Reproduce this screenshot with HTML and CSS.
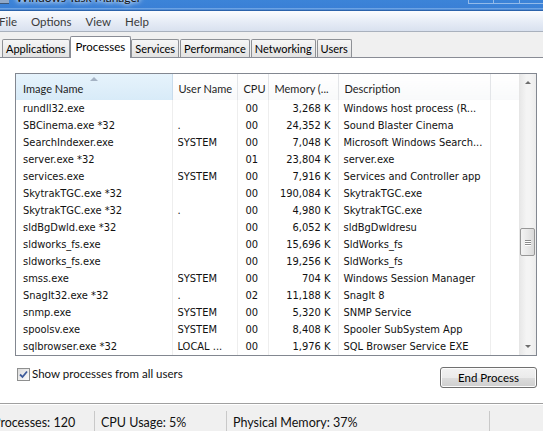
FILE: index.html
```html
<!DOCTYPE html>
<html lang="en">
<head>
  <meta charset="UTF-8">
  <title>Windows Task Manager</title>
  <link rel="stylesheet" href="styles.css">
</head>
<body>
  <div class="window">
    <div class="titlebar">
      <span class="app-icon"></span>
      <span class="title">Windows Task Manager</span>
      <div class="caption-btns">
        <span></span><span></span><span></span>
      </div>
    </div>

    <nav class="menubar">
      <span class="menu-item first">File</span>
      <span class="menu-item">Options</span>
      <span class="menu-item">View</span>
      <span class="menu-item">Help</span>
    </nav>

    <div class="tabstrip">
      <div class="tab">Applications</div>
      <div class="tab active">Processes</div>
      <div class="tab">Services</div>
      <div class="tab">Performance</div>
      <div class="tab">Networking</div>
      <div class="tab">Users</div>
    </div>

    <div class="page">
      <div class="listview">
        <table class="proc-table">
          <colgroup>
            <col class="c-name"><col class="c-user"><col class="c-cpu"><col class="c-mem"><col class="c-desc"><col class="c-fill">
          </colgroup>
          <thead>
            <tr>
              <th class="sorted"><span class="sort-arrow"></span>Image Name</th>
              <th>User Name</th>
              <th>CPU</th>
              <th>Memory (...</th>
              <th>Description</th>
              <th class="fill"></th>
            </tr>
          </thead>
          <tbody>
            <tr><td>rundll32.exe</td><td></td><td class="cpu">00</td><td class="mem">3,268 K</td><td>Windows host process (R...</td><td></td></tr>
            <tr><td>SBCinema.exe *32</td><td>.</td><td class="cpu">00</td><td class="mem">24,352 K</td><td>Sound Blaster Cinema</td><td></td></tr>
            <tr><td>SearchIndexer.exe</td><td><span class="clip">SYSTEM</span></td><td class="cpu">00</td><td class="mem">7,048 K</td><td>Microsoft Windows Search...</td><td></td></tr>
            <tr><td>server.exe *32</td><td></td><td class="cpu">01</td><td class="mem">23,804 K</td><td>server.exe</td><td></td></tr>
            <tr><td>services.exe</td><td><span class="clip">SYSTEM</span></td><td class="cpu">00</td><td class="mem">7,916 K</td><td>Services and Controller app</td><td></td></tr>
            <tr><td>SkytrakTGC.exe *32</td><td></td><td class="cpu">00</td><td class="mem">190,084 K</td><td>SkytrakTGC.exe</td><td></td></tr>
            <tr><td>SkytrakTGC.exe *32</td><td>.</td><td class="cpu">00</td><td class="mem">4,980 K</td><td>SkytrakTGC.exe</td><td></td></tr>
            <tr><td>sldBgDwld.exe *32</td><td></td><td class="cpu">00</td><td class="mem">6,052 K</td><td>sldBgDwldresu</td><td></td></tr>
            <tr><td>sldworks_fs.exe</td><td></td><td class="cpu">00</td><td class="mem">15,696 K</td><td>SldWorks_fs</td><td></td></tr>
            <tr><td>sldworks_fs.exe</td><td></td><td class="cpu">00</td><td class="mem">19,256 K</td><td>SldWorks_fs</td><td></td></tr>
            <tr><td>smss.exe</td><td><span class="clip">SYSTEM</span></td><td class="cpu">00</td><td class="mem">704 K</td><td>Windows Session Manager</td><td></td></tr>
            <tr><td>SnagIt32.exe *32</td><td>.</td><td class="cpu">02</td><td class="mem">11,188 K</td><td>SnagIt 8</td><td></td></tr>
            <tr><td>snmp.exe</td><td>SYSTEM</td><td class="cpu">00</td><td class="mem">5,320 K</td><td>SNMP Service</td><td></td></tr>
            <tr><td>spoolsv.exe</td><td>SYSTEM</td><td class="cpu">00</td><td class="mem">8,408 K</td><td>Spooler SubSystem App</td><td></td></tr>
            <tr><td>sqlbrowser.exe *32</td><td>LOCAL ...</td><td class="cpu">00</td><td class="mem">1,976 K</td><td>SQL Browser Service EXE</td><td></td></tr>
          </tbody>
        </table>

        <div class="scrollbar">
          <div class="sb-btn"><span class="arrow up"></span></div>
          <div class="sb-track">
            <div class="sb-thumb"><span></span><span></span><span></span></div>
          </div>
          <div class="sb-btn"><span class="arrow down"></span></div>
        </div>
      </div>

      <div class="actions">
        <label class="check">
          <span class="check-box">
            <svg width="9" height="9" viewBox="0 0 9 9"><path d="M1 4.5 L3.5 7 L8 1.5" fill="none" stroke="#3c5a9a" stroke-width="1.8"/></svg>
          </span>
          Show processes from all users
        </label>
        <button class="btn">End Process</button>
      </div>
    </div>

    <div class="statusbar">
      <div class="status-cell first">Processes: 120</div>
      <div class="status-cell second">CPU Usage: 5%</div>
      <div class="status-cell third">Physical Memory: 37%</div>
      <div class="status-cell rest"></div>
    </div>
  </div>
</body>
</html>
```

FILE: styles.css
```css
* {
  margin: 0;
  padding: 0;
  box-sizing: border-box;
}

body {
  font-family: Lato, "Open Sans", sans-serif;
  color: #000;
  background: #f0f0f0;
  width: 543px;
  height: 431px;
  overflow: hidden;
}

.window {
  width: 543px;
  height: 431px;
  overflow: hidden;
}

/* title bar (only its lower edge is on screen) */
.titlebar {
  height: 11px;
  display: flex;
  overflow: hidden;
  background: linear-gradient(#3c84d8 0%, #3a80d6 70%, #7fb0e8 80%, #3577cc 90%, #22518f 100%);
}

.app-icon {
  width: 9px;
  height: 4px;
  background: #8fa8c8;
  border-bottom: 1px solid #3d5778;
}

.title {
  margin: -9px 0 0 7px;
  font-size: 12px;
  line-height: 14px;
  color: #111;
  text-shadow: 0 0 4px #fff, 0 0 6px #fff;
}

.caption-btns {
  margin-left: auto;
  margin-right: -2px;
  display: flex;
  height: 4px;
}

.caption-btns span {
  width: 26px;
  border: 1px solid rgba(255, 255, 255, 0.45);
  border-top: none;
  border-right: none;
}

.caption-btns span:first-child {
  width: 25px;
}

/* menu bar */
.menubar {
  height: 21px;
  display: flex;
  align-items: center;
  background: linear-gradient(#fbfcfe, #e6ecf6 55%, #d9e1ef);
  border-bottom: 1px solid #a9b1bd;
  font-size: 11.5px;
  color: #3a3a3a;
}

.menu-item {
  margin-left: 14px;
}

.menu-item.first {
  margin-left: -1px;
}

/* tabs */
.tabstrip {
  height: 26px;
  display: flex;
  align-items: flex-end;
  padding-left: 2px;
  border-bottom: 1px solid #898c95;
  font-size: 11px;
}

.tab {
  height: 18px;
  padding: 0 3px;
  margin-right: 1px;
  display: flex;
  align-items: center;
  border: 1px solid #8e9196;
  border-bottom: none;
  border-radius: 2px 2px 0 0;
  background: linear-gradient(#f6f6f6, #e2e2e2);
  color: #000;
}

.tab.active {
  height: 22px;
  margin: 0 0 -1px -1px;
  padding: 0 5px 3px;
  background: #fff;
  border-color: #898c95;
  font-size: 11.5px;
}

/* process page */
.page {
  height: 345px;
  background: #fff;
  padding: 15px 0 0 15px;
}

.listview {
  width: 522px;
  height: 283px;
  display: flex;
  border: 1px solid #828790;
  overflow: hidden;
}

.proc-table {
  width: 503px;
  table-layout: fixed;
  border-collapse: collapse;
  align-self: flex-start;
}

.c-name { width: 156px; }
.c-user { width: 65px; }
.c-cpu { width: 31px; }
.c-mem { width: 70px; }
.c-desc { width: 152px; }
.c-fill { width: 29px; }

.proc-table th {
  height: 26px;
  padding: 3px 0 0 6px;
  text-align: left;
  font-weight: normal;
  font-size: 11px;
  color: #1e1e1e;
  white-space: nowrap;
  overflow: hidden;
  background: linear-gradient(#fff, #f8f9fa);
  border-right: 1px solid #e3e5e8;
}

.proc-table th.sorted {
  position: relative;
  padding-left: 7px;
  background: linear-gradient(#e6f3fc, #d8ebf8);
  border-right-color: #c9dcec;
}

.proc-table th.fill {
  border-right: none;
}

.sort-arrow {
  position: absolute;
  top: 3px;
  left: 74px;
  width: 0;
  height: 0;
  border-left: 4px solid transparent;
  border-right: 4px solid transparent;
  border-bottom: 4px solid #a4b2c3;
}

.proc-table td {
  height: 17px;
  padding: 0 0 0 5px;
  font-family: "DejaVu Sans Condensed", "DejaVu Sans", sans-serif;
  font-stretch: condensed;
  font-size: 11px;
  line-height: 17px;
  color: #111;
  white-space: nowrap;
  overflow: hidden;
  border-right: 1px solid #eeeeee;
}

.proc-table td:first-child {
  padding-left: 7px;
}

.proc-table td:last-child {
  border-right: none;
}

.proc-table td.cpu {
  padding-left: 8px;
}

.proc-table td.mem {
  text-align: right;
  padding: 0 7px 0 0;
}

.clip {
  display: inline-block;
  width: 42px;
  overflow: hidden;
  vertical-align: top;
}

/* vertical scroll bar */
.scrollbar {
  width: 17px;
  margin-left: auto;
  display: flex;
  flex-direction: column;
  background: linear-gradient(90deg, #e8e8e8, #f4f4f4 40%, #f4f4f4 60%, #ececec);
  border-left: 1px solid #e6e6e6;
}

.sb-btn {
  height: 17px;
  display: flex;
  align-items: center;
  justify-content: center;
}

.arrow {
  width: 0;
  height: 0;
  border-left: 3px solid transparent;
  border-right: 3px solid transparent;
}

.arrow.up {
  border-bottom: 3px solid #6d6d6d;
}

.arrow.down {
  border-top: 3px solid #6d6d6d;
}

.sb-track {
  flex: 1;
}

.sb-thumb {
  margin: 137px 1px 0 0;
  height: 28px;
  border: 1px solid #979797;
  border-radius: 2px;
  background: linear-gradient(90deg, #f3f3f3, #e8e8e8 50%, #d9d9d9);
  display: flex;
  flex-direction: column;
  align-items: center;
  justify-content: center;
  gap: 1px;
}

.sb-thumb span {
  width: 6px;
  height: 1px;
  background: #8a8a8a;
  box-shadow: 0 1px 0 #fff;
}

/* checkbox + button row */
.actions {
  width: 522px;
  margin-top: 11px;
  display: flex;
  align-items: flex-start;
  justify-content: space-between;
}

.check {
  display: flex;
  align-items: center;
  gap: 2px;
  margin: 0 0 0 2px;
  font-size: 11.5px;
  color: #111;
  line-height: 14px;
}

.check-box {
  width: 13px;
  height: 13px;
  border: 1px solid #8e8f8f;
  background: linear-gradient(135deg, #dcdcdc, #fbfbfb);
  display: flex;
  align-items: center;
  justify-content: center;
}

.btn {
  width: 97px;
  height: 21px;
  border: 1px solid #707070;
  border-radius: 3px;
  background: linear-gradient(#f2f2f2 0%, #ebebeb 50%, #dddddd 51%, #cfcfcf 100%);
  box-shadow: inset 0 0 0 1px #fcfcfc;
  font-family: Lato, "Open Sans", sans-serif;
  font-size: 11.5px;
  color: #000;
}

/* status bar */
.statusbar {
  height: 29px;
  display: flex;
  border-top: 1px solid #a0a0a0;
  box-shadow: inset 0 1px 0 #fff;
  background: #f0f0f0;
  font-size: 12.5px;
  color: #111;
}

.status-cell {
  margin-top: 7px;
  padding: 4px 0 0 6px;
  white-space: nowrap;
  overflow: hidden;
  border-right: 1px solid #c9c9c9;
}

.status-cell.first {
  width: 95px;
  text-indent: -13px;
}

.status-cell.second {
  width: 132px;
}

.status-cell.third {
  width: 263px;
}

.status-cell.rest {
  flex: 1;
  border-right: none;
}
```
